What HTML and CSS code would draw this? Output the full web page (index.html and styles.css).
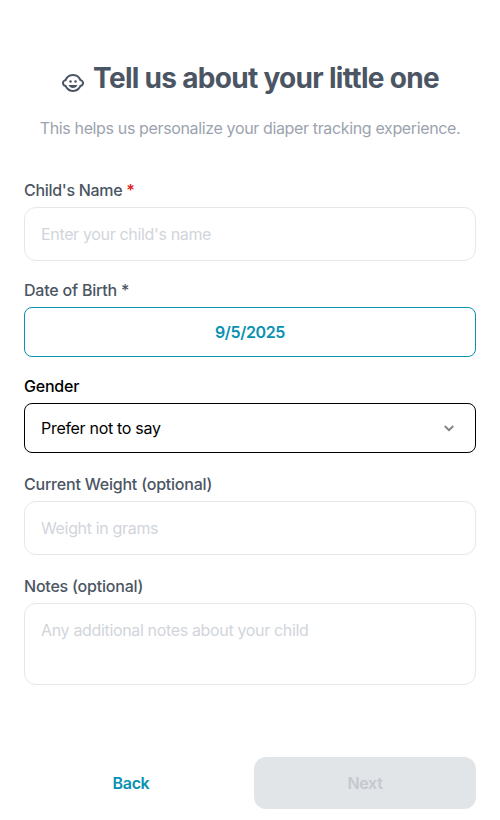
FILE: index.html
```html
<!DOCTYPE html>
<html lang="en">
<head>
<meta charset="utf-8">
<title>Child profile</title>
<link rel="stylesheet" href="styles.css">
</head>
<body>
<main class="page">
  <header class="header">
    <h1 class="title">
      <svg class="face" viewBox="0 0 24 24" width="24" height="24"><circle cx="14.5" cy="10.5" r="1.25"/><circle cx="9.5" cy="10.5" r="1.25"/><path d="M22.94 11.34c-.25-1.51-1.36-2.74-2.81-3.17-.53-1.12-1.28-2.1-2.19-2.91C16.36 3.85 14.28 3 12 3s-4.36.85-5.94 2.26c-.92.81-1.67 1.8-2.19 2.91-1.45.43-2.56 1.65-2.81 3.17-.04.21-.06.43-.06.66 0 .23.02.45.06.66.25 1.51 1.36 2.74 2.81 3.17.52 1.11 1.27 2.09 2.17 2.89C7.62 20.14 9.71 21 12 21s4.38-.86 5.97-2.28c.9-.8 1.65-1.79 2.17-2.89 1.44-.43 2.55-1.65 2.8-3.17.04-.21.06-.43.06-.66 0-.23-.02-.45-.06-.66zM19 14c-.1 0-.19-.02-.29-.03-.2.67-.49 1.29-.86 1.86C16.6 17.74 14.45 19 12 19s-4.6-1.26-5.85-3.17c-.37-.57-.66-1.19-.86-1.86-.1.01-.19.03-.29.03-1.1 0-2-.9-2-2s.9-2 2-2c.1 0 .19.02.29.03.2-.67.49-1.29.86-1.86C7.4 6.26 9.55 5 12 5s4.6 1.26 5.85 3.17c.37.57.66 1.19.86 1.86.1-.01.19-.03.29-.03 1.1 0 2 .9 2 2s-.9 2-2 2zM7.5 14c.76 1.77 2.49 3 4.5 3s3.74-1.23 4.5-3h-9z"/></svg>
      <span class="title-text">Tell us about your little one</span>
    </h1>
    <p class="subtitle"><span>This helps us personalize your diaper tracking experience.</span></p>
  </header>
  <form class="form">
    <div class="field name">
      <label class="label tight">Child's Name <span class="required">*</span></label>
      <div class="input">Enter your child's name</div>
    </div>
    <div class="field birth">
      <label class="label">Date of Birth *</label>
      <div class="date">9/5/2025</div>
    </div>
    <div class="field gender">
      <label class="label dark">Gender</label>
      <div class="select"><span>Prefer not to say</span><svg class="chevron" viewBox="0 0 12 12" width="12" height="12"><path d="M1.8 4l4.2 4.2L10.2 4"/></svg></div>
    </div>
    <div class="field weight">
      <label class="label">Current Weight (optional)</label>
      <div class="input">Weight in grams</div>
    </div>
    <div class="field">
      <label class="label">Notes (optional)</label>
      <div class="input notes">Any additional notes about your child</div>
    </div>
  </form>
  <footer class="actions">
    <button class="button back">Back</button>
    <button class="button next" disabled>Next</button>
  </footer>
</main>
</body>
</html>
```
FILE: styles.css
```css
* { box-sizing: border-box; }
body { margin: 0; background: #fff; font-family: Inter, sans-serif; font-size: 16px; line-height: 24px; color: #4b5563; }
.page { height: 820px; padding: 60px 24px 0; display: flex; flex-direction: column; }
.header { height: 120px; }
.title { margin: 0; height: 36px; display: flex; justify-content: center; gap: 8px; font-size: 28px; line-height: 36px; font-weight: 700; white-space: nowrap; letter-spacing: -0.7px; font-variant-ligatures: none; }
.face { margin-top: 11px; fill: #4b5563; flex: none; }
.subtitle { margin: 20px 0 0; text-align: center; color: #9ca3af; white-space: nowrap; letter-spacing: -0.36px; }
.form { flex: 1; }
.field { display: flex; flex-direction: column; }
.name, .birth { margin-bottom: 19px; }
.gender, .weight { margin-bottom: 21px; }
.label { height: 20px; line-height: 20px; margin-bottom: 7px; font-weight: 500; letter-spacing: -0.21px; }
.tight { letter-spacing: -0.3px; }
.required { color: #dc2626; font-weight: 600; }
.dark { color: #000; }
.input { height: 54px; padding: 14px 16px; border: 1px solid #e5e7eb; border-radius: 12px; color: #d1d5db; letter-spacing: -0.34px; }
.notes { height: 82px; }
.date, .select { height: 50px; border: 1px solid #0891b2; border-radius: 8px; display: flex; align-items: center; justify-content: center; color: #0891b2; font-weight: 600; letter-spacing: -0.35px; }
.select { justify-content: space-between; padding: 0 20px 0 16px; border-color: #000; color: #000; font-weight: 400; letter-spacing: -0.3px; }
.chevron { fill: none; stroke: #808080; stroke-width: 1.8; }
.actions { height: 63px; display: flex; gap: 8px; }
.button { width: 222px; height: 52px; border: 0; border-radius: 12px; padding: 0; font: 600 16px/24px Inter, sans-serif; letter-spacing: -0.35px; }
.back { background: transparent; color: #0891b2; width: 214px; margin-right: 8px; }
.next { background: #e1e5e8; color: #c4c9cf; }
```
